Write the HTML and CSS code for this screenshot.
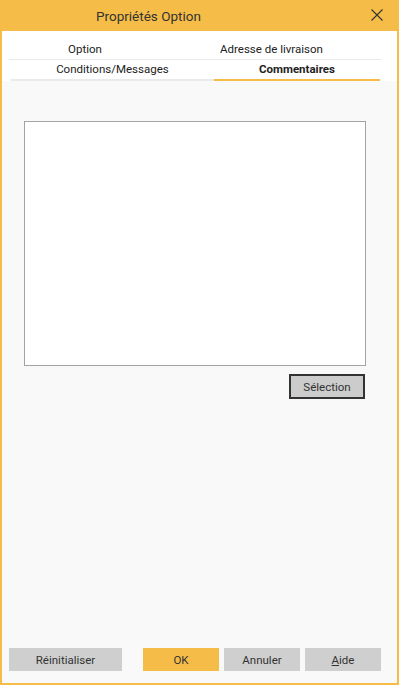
FILE: index.html
```html
<!DOCTYPE html>
<html lang="fr">
<head>
  <meta charset="UTF-8">
  <title>Propriétés Option</title>
  <meta name="viewport" content="width=device-width, initial-scale=1.0">
  <link rel="stylesheet" href="styles.css">
</head>
<body>
  <div class="dialog">
    <div class="title-bar">
      <span class="title">Propriétés Option</span>
      <button class="btn-close" aria-label="Fermer">
        <svg viewBox="0 0 12 12" width="12" height="12">
          <path d="M0.5 0.5 L11.5 11.5 M11.5 0.5 L0.5 11.5" stroke="#333" stroke-width="1.1" fill="none"/>
        </svg>
      </button>
    </div>
    <div class="tabs">
      <div class="tab-row first">
        <div class="tab">Option</div>
        <div class="tab">Adresse de livraison</div>
      </div>
      <div class="tab-row second">
        <div class="tab">Conditions/Messages</div>
        <div class="tab active">Commentaires</div>
      </div>
    </div>
    <div class="content">
      <textarea class="comments"></textarea>
      <div class="select-row">
        <button class="btn-select">Sélection</button>
      </div>
    </div>
    <div class="footer">
      <button class="btn btn-reset">Réinitialiser</button>
      <div class="footer-right">
        <button class="btn btn-ok">OK</button>
        <button class="btn">Annuler</button>
        <button class="btn"><u>A</u>ide</button>
      </div>
    </div>
  </div>
</body>
</html>
```

FILE: styles.css
```css
html, body {
  margin: 0;
  padding: 0;
  height: 100%;
  background: #fff;
  font-family: Roboto, 'Liberation Sans', Arial, sans-serif;
}
.dialog {
  width: 399px;
  height: 685px;
  box-sizing: border-box;
  border: 2px solid #f5bd47;
  border-top: none;
  background: #f9f9f9;
  display: flex;
  flex-direction: column;
}
.title-bar {
  height: 31px;
  background: #f5bd47;
  display: flex;
  align-items: center;
  position: relative;
}
.title {
  margin-left: 94px;
  font-size: 13.5px;
  color: #333;
}
.btn-close {
  position: absolute;
  right: 13px;
  top: 8px;
  width: 14px;
  height: 14px;
  padding: 0;
  border: none;
  background: none;
  display: flex;
  align-items: center;
  justify-content: center;
}
.tabs {
  background: #fff;
  padding-top: 7px;
}
.tab-row {
  display: flex;
  font-size: 11.5px;
  color: #222;
}
.tab-row.first {
  margin: 0 15px 0 7px;
  border-bottom: 1px solid #eaeaea;
}
.tab-row.second {
  margin: 0 17px 0 9px;
}
.tab {
  flex: 1 1 auto;
  text-align: center;
  height: 21px;
  line-height: 22px;
  white-space: nowrap;
}
.tab-row.second .tab {
  height: 19px;
  line-height: 19px;
  border-bottom: 2px solid #eaeaea;
}
.tab-row.second .tab.active {
  font-weight: bold;
  border-bottom-color: #f5bd47;
}
.content {
  flex: 1;
  padding: 40px 31px 0 22px;
}
.comments {
  display: block;
  width: 100%;
  height: 245px;
  box-sizing: border-box;
  border: 1px solid #a3a3a3;
  background: #fff;
  resize: none;
  margin: 0;
}
.select-row {
  display: flex;
  justify-content: flex-end;
  margin-top: 8px;
  padding-right: 1px;
}
.btn-select {
  width: 76px;
  height: 25px;
  border: 2px solid #333;
  background: #ccc;
  font-family: inherit;
  font-size: 11.5px;
  color: #333;
  padding: 0;
}
.footer {
  display: flex;
  padding: 0 16px 12px 7px;
}
.footer-right {
  display: flex;
  gap: 5px;
  margin-left: 21px;
}
.btn {
  flex: none;
  width: 76px;
  height: 23px;
  border: none;
  background: #cfcfcf;
  font-family: inherit;
  font-size: 11.5px;
  color: #333;
  padding: 0;
}
.btn-reset {
  width: 113px;
}
.btn-ok {
  background: #f5bd47;
}
```
